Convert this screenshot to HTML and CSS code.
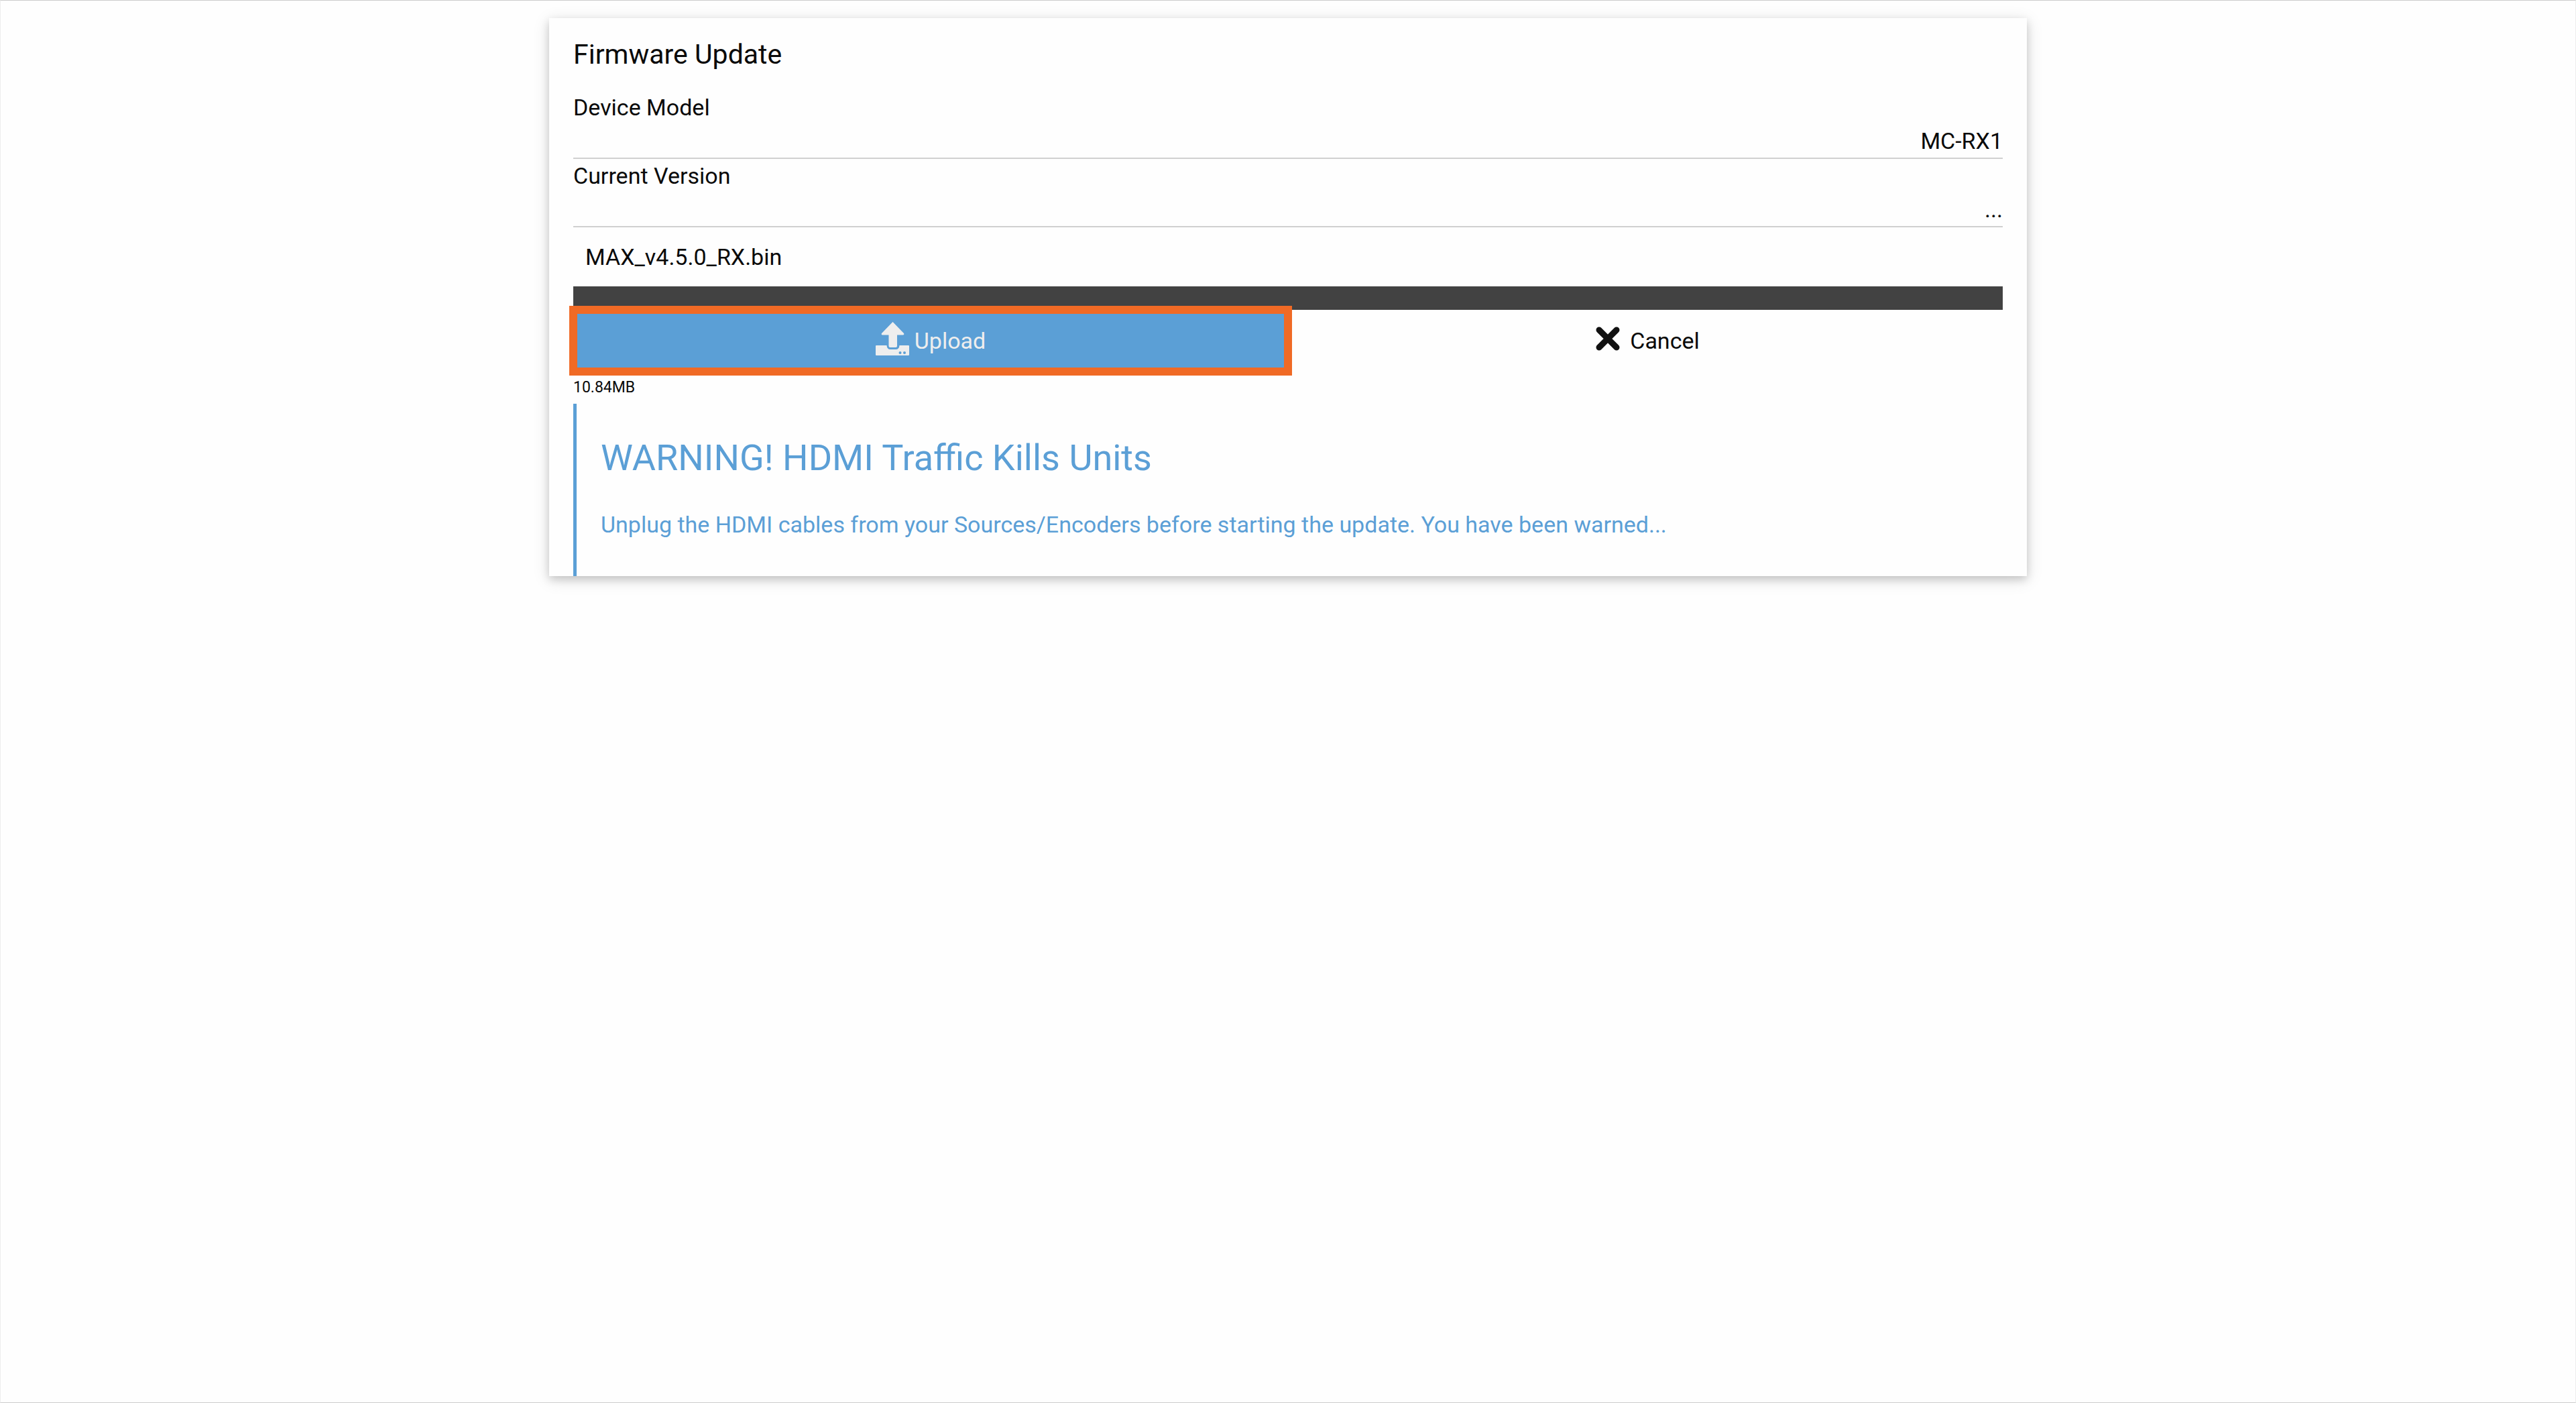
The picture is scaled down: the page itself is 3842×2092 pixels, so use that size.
FILE: index.html
```html
<!DOCTYPE html>
<html lang="en">
  <head>
    <meta charset="UTF-8" />
    <meta name="viewport" content="width=device-width, initial-scale=1.0" />
    <title>Firmware Update</title>
    <link rel="stylesheet" href="styles.css">
  </head>
  <body>
    <main class="card">
      <h1>Firmware Update</h1>

      <dl class="info">
        <dt>Device Model</dt>
        <dd>MC-RX1</dd>
        <dt>Current Version</dt>
        <dd>...</dd>
      </dl>

      <div class="file">MAX_v4.5.0_RX.bin</div>
      <div class="progress"></div>

      <div class="actions">
        <button type="button" class="upload">
          <svg viewBox="0 0 50 50" aria-hidden="true">
            <path d="M25.5 0 L42 17 Q43 19 41 19.5 H32 V36 Q32 38 30 38 H21.5 Q19.5 38 19.5 36 V19.5 H10 Q8 19 9 17 Z" />
            <path fill-rule="evenodd" d="M1 35 H16.5 Q17 41 22 41 H30 Q35 41 35.5 35 H49 Q50 35 50 36 V49 Q50 50 49 50 H1 Q0 50 0 49 V36 Q0 35 1 35 Z M36.5 44 a2 2 0 1 0 0 4 a2 2 0 1 0 0 -4 Z M43 44 a2 2 0 1 0 0 4 a2 2 0 1 0 0 -4 Z" />
          </svg>
          Upload
        </button>
        <button type="button" class="cancel">
          <svg viewBox="0 0 50 50" aria-hidden="true">
            <path d="M12 12 L38 38 M38 12 L12 38" />
          </svg>
          Cancel
        </button>
      </div>

      <div class="size">10.84MB</div>

      <section class="warning">
        <h2>WARNING! HDMI Traffic Kills Units</h2>
        <p>
          Unplug the HDMI cables from your Sources/Encoders before starting the
          update. You have been warned...
        </p>
      </section>
    </main>
  </body>
</html>
```

FILE: styles.css
```css
* {
  box-sizing: border-box;
}

html {
  min-height: 100%;
  display: flex;
}

body {
  flex: 1;
  margin: 0;
  padding: 26px 18px;
  border: 1px solid #ccc;
  border-left-color: #eee;
  border-right-color: #eee;
  background-color: #fefefe;
  color: #0a0a0a;
  font-family: Roboto, sans-serif;
  font-size: 34px;
  line-height: 50px;
}

h1,
h2,
p,
dl,
dd {
  margin: 0;
  font-weight: normal;
}

.card {
  max-width: 2204px;
  margin: 0 auto;
  padding: 26px 36px 0;
  background-color: #fefefe;
  box-shadow: 0 5px 12px rgba(0, 0, 0, 0.16), 0 5px 24px rgba(0, 0, 0, 0.12);
}

h1 {
  margin-bottom: 26px;
  font-size: 41px;
  line-height: 56px;
}

.info dd {
  text-align: right;
  border-bottom: 2px solid #d0d0d0;
}

.file {
  padding: 19px 18px;
}

.progress {
  height: 35px;
  background-color: #424242;
}

.actions {
  display: flex;
}

button {
  flex: 1;
  display: flex;
  align-items: center;
  justify-content: center;
  gap: 8px;
  height: 92px;
  padding: 0;
  border: none;
  background-color: transparent;
  color: #0a0a0a;
  font: inherit;
}

button svg {
  width: 50px;
  height: 50px;
  margin-bottom: 6px;
}

.upload {
  background-color: #5b9fd6;
  color: #eee;
  outline: 12px solid #f06a25;
  outline-offset: -6px;
}

.upload svg {
  fill: #eee;
}

.cancel svg {
  stroke: #111;
  stroke-width: 9;
  stroke-linecap: round;
}

.size {
  font-size: 23px;
  line-height: 48px;
}

.warning {
  padding: 43px 36px 52px;
  border-left: 5px solid #5b9fd6;
  color: #5b9fd6;
}

.warning h2 {
  margin-bottom: 36px;
  font-size: 54px;
  line-height: 76px;
}
```
